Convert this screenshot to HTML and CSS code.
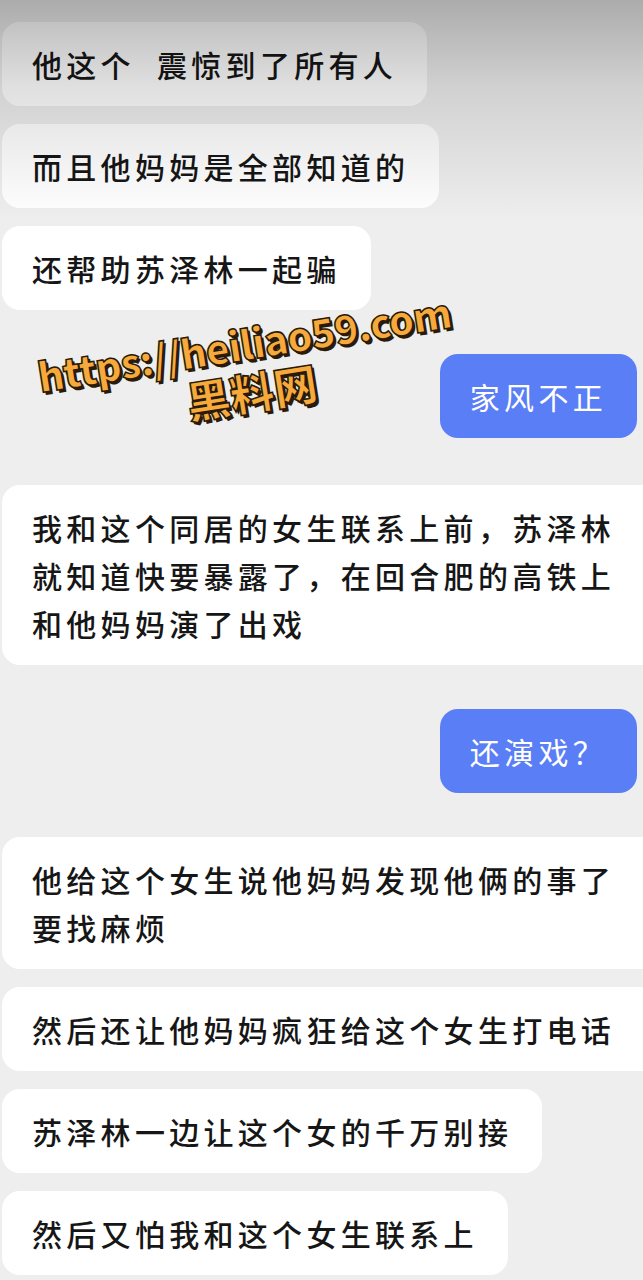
FILE: index.html
```html
<!DOCTYPE html>
<html>
  <head>
    <title>聊天记录</title>
    <link rel="stylesheet" href="styles.css">
  </head>
  <body>
    <div class="shade"></div>
    <div class="chat">
      <div class="msg left">他这个&nbsp;&nbsp;震惊到了所有人</div>
      <div class="msg left">而且他妈妈是全部知道的</div>
      <div class="msg left">还帮助苏泽林一起骗</div>
      <div class="msg right far">家风不正</div>
      <div class="msg left farther wide">我和这个同居的女生联系上前，苏泽林就知道快要暴露了，在回合肥的高铁上和他妈妈演了出戏</div>
      <div class="msg right far">还演戏？</div>
      <div class="msg left far wide">他给这个女生说他妈妈发现他俩的事了要找麻烦</div>
      <div class="msg left wide">然后还让他妈妈疯狂给这个女生打电话</div>
      <div class="msg left">苏泽林一边让这个女的千万别接</div>
      <div class="msg left">然后又怕我和这个女生联系上</div>
    </div>

    <div class="mark">
      <div class="mark-url">https://heiliao59.com</div>
      <div class="mark-name">黑料网</div>
    </div>
  </body>
</html>
```

FILE: styles.css
```css
body {
  margin: 0;
  padding: 0;
  background-color: #eeeeee;
  font-family: "Noto Sans CJK SC", "Noto Sans", sans-serif;
  overflow-x: hidden;
}
.shade {
  position: absolute;
  top: 0;
  left: 0;
  right: 0;
  height: 220px;
  background: linear-gradient(to bottom, rgba(0, 0, 0, 0.28), rgba(0, 0, 0, 0.12) 40%, rgba(0, 0, 0, 0) 100%);
  pointer-events: none;
  z-index: 2;
}
.chat {
  display: flex;
  flex-direction: column;
  align-items: flex-start;
  gap: 18px;
  padding: 22px 0 0 2px;
}
.msg {
  box-sizing: border-box;
  padding: 18px 30px;
  border-radius: 18px;
  font-size: 30px;
  font-weight: 500;
  line-height: 48px;
  letter-spacing: 4.3px;
  color: #161616;
  background: #ffffff;
}
.msg.wide {
  width: 660px;
}
.msg.far {
  margin-top: 26px;
}
.msg.farther {
  margin-top: 29px;
}
.msg.right {
  align-self: flex-end;
  margin-right: 6px;
  background: #5a7ef6;
  color: #ffffff;
  font-weight: 400;
}
.mark {
  position: absolute;
  left: 28px;
  top: 320px;
  width: 440px;
  text-align: center;
  transform: rotate(-9deg);
  font-family: "Noto Sans CJK SC", sans-serif;
  font-weight: 900;
  color: #f7a93c;
  -webkit-text-stroke: 1.5px #2a1a08;
  text-shadow: 2px 3px 0 #2a1a08;
  z-index: 3;
}
.mark-url {
  font-size: 40px;
  line-height: 46px;
  letter-spacing: -1px;
}
.mark-name {
  font-size: 44px;
  line-height: 50px;
}
```
